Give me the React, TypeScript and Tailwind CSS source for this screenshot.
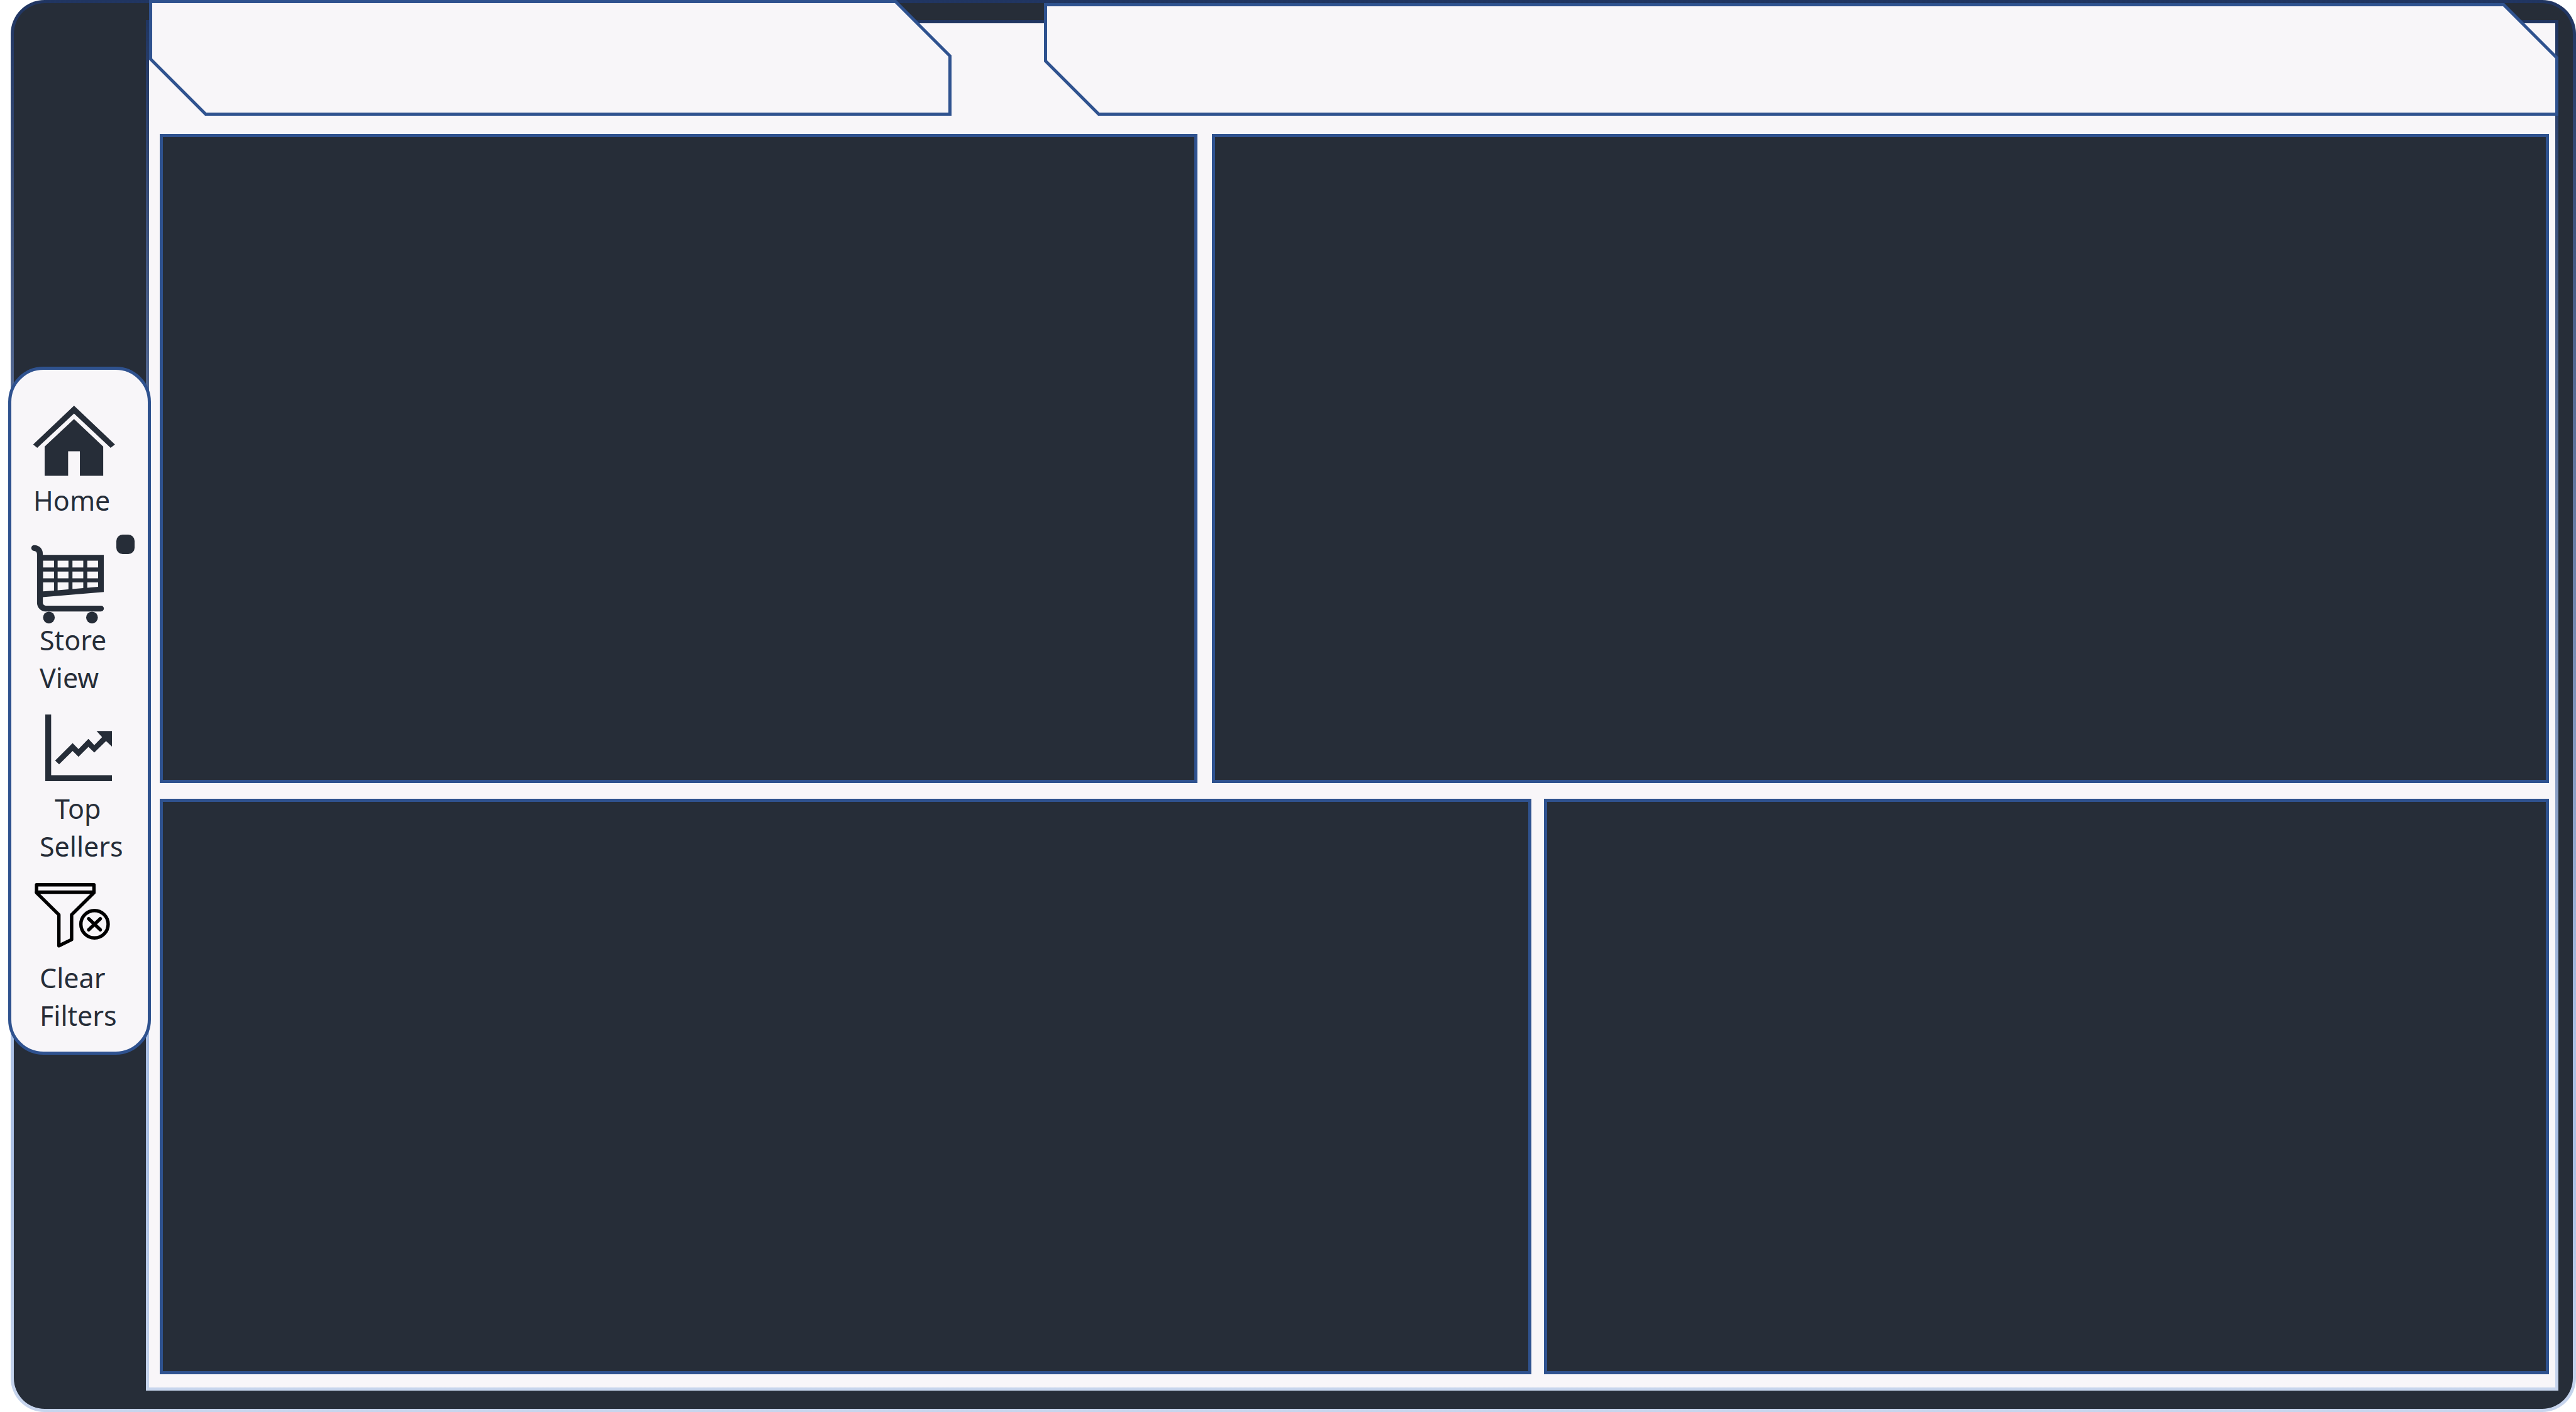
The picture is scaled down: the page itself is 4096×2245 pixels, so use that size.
import type { ReactNode } from "react";

function HomeIcon() {
  return (
    <svg aria-hidden="true" viewBox="0 0 146 126" className="ml-[3px] h-[114px] w-[132px]" fill="currentColor">
      <path d="M72.7 1 L144.7 69.3 L137 75.3 L72.7 14.8 L8 75.3 L.7 69.3Z" />
      <path d="M72.7 24.7 L124 72.9 V124.3 H83 V81.2 H62.3 V124.3 H21 V72.9Z" />
    </svg>
  );
}

function CartIcon() {
  return (
    <svg aria-hidden="true" viewBox="0 0 129 139" className="h-[126px] w-[117px]" fill="currentColor">
      <path
        d="M5.8 5.8 C12.5 6 16 10 16 17 V102 a10 10 0 0 0 10 10 H123"
        fill="none"
        stroke="currentColor"
        strokeWidth="10.2"
        strokeLinecap="round"
      />
      <path
        fillRule="evenodd"
        d="M20 17.9 H128 V83.1 L20 92.2Z
           M21.3 28.2 V40 H40.7 V28.2Z M47 28.2 V40 H66 V28.2Z M73 28.2 V40 H92 V28.2Z M99 28.2 V40 H118 V28.2Z
           M21.3 47.1 V59 H40.7 V47.1Z M47 47.1 V59 H66 V47.1Z M73 47.1 V59 H92 V47.1Z M99 47.1 V59 H118 V47.1Z
           M21.3 66.1 V82 L40.7 80.4 V66.1Z M47 66.1 V79.9 L66 78.3 V66.1Z M73 66.1 V77.7 L92 76.1 V66.1Z M99 66.1 V75.6 L118 74 V66.1Z"
      />
      <circle cx="31.7" cy="127.8" r="10.3" />
      <circle cx="107.3" cy="127.8" r="10.3" />
    </svg>
  );
}

function TrendIcon() {
  return (
    <svg aria-hidden="true" viewBox="0 0 117 117" className="ml-[23px] size-[106px]" fill="currentColor">
      <path d="M0 0 H10.3 V106.5 H117 V117 H0Z" />
      <path d="M17.3 80.8 L48 50.1 L58.3 60.6 L75.7 42.9 L86 53.9 L99.7 39.6 L90 29 H117 V56.4 L106.7 46.7 L86 66.9 L75.7 56.8 L58.3 74.1 L48 64 L24.3 87.5Z" />
    </svg>
  );
}

function ClearFilterIcon() {
  return (
    <svg
      aria-hidden="true"
      viewBox="0 0 133 114"
      className="ml-1.5 h-[103px] w-[121px] text-black"
      fill="none"
      stroke="currentColor"
      strokeWidth="6"
      strokeLinecap="round"
      strokeLinejoin="round"
    >
      <path d="M3 3.1 H104 V17 L64.7 55.7 V99.5 L42.3 110.4 V55.7 L3 17Z" />
      <path d="M3 16.1 H104" />
      <circle cx="105" cy="72.5" r="24" />
      <path d="M94.8 62.8 L115.2 82.2 M115.2 62.8 L94.8 82.2" />
    </svg>
  );
}

function Tab({ outer, inner }: { outer: string; inner: string }) {
  return (
    <div className={outer}>
      <div className={inner} />
    </div>
  );
}

function Panel({ className, label }: { className: string; label: string }) {
  return <section aria-label={label} className={`min-w-0 border-5 border-[#2f528f] bg-[#262d38] ${className}`} />;
}

function Label({ className, children }: { className: string; children: ReactNode }) {
  return <span className={`block text-[43px] leading-[60px] ${className}`}>{children}</span>;
}

export default function App() {
  return (
    <div className="flex min-h-screen bg-white pl-[17px] font-['Noto_Sans',sans-serif] text-[#262d38]">
      <div className="flex min-w-0 flex-1 rounded-[54px] border-5 border-transparent [background:linear-gradient(#262d38,#262d38)_padding-box,linear-gradient(#203561,#abc0e4_74%,#abc0e4_83%,#c7d5ed)_border-box]">
        <aside className="relative z-10 flex w-[210px] shrink-0 flex-col justify-center pt-[15px]">
          <nav className="-ml-[9px] flex w-[227px] flex-col gap-7 rounded-[56px] border-5 border-[#2f528f] bg-[#f8f6f9] pt-14 pb-[27px]">
            <a href="#home" className="mb-3 flex flex-col items-start gap-2 pl-[31px]">
              <HomeIcon />
              <Label className="ml-1">Home</Label>
            </a>
            <a href="#store" className="relative flex flex-col items-start pl-[31px]">
              <CartIcon />
              <Label className="-mt-1 ml-3.5">
                Store
                <br />
                View
              </Label>
              <span className="absolute -top-4 left-[167px] h-[31px] w-[29px] rounded-[10px] bg-[#262d38]" />
            </a>
            <a href="#sellers" className="flex flex-col items-start gap-3.5 pl-[31px]">
              <TrendIcon />
              <Label className="ml-3.5 indent-6">
                Top
                <br />
                Sellers
              </Label>
            </a>
            <button type="button" className="flex flex-col items-start gap-[18px] pl-[31px] text-left">
              <ClearFilterIcon />
              <Label className="ml-3.5">
                Clear
                <br />
                Filters
              </Label>
            </button>
          </nav>
        </aside>

        <main className="mt-[27px] mr-[23px] mb-[29px] flex min-w-0 flex-1 flex-col border-5 border-transparent [background:linear-gradient(#f8f6f9,#f8f6f9)_padding-box,linear-gradient(#203561,#abc0e4_74%,#abc0e4_83%,#c7d5ed)_border-box]">
          <header className="-mt-[37px] -mr-[5px] flex h-[184px] shrink-0">
            <Tab
              outer="flex flex-[1266] bg-[#2f528f] p-[5px] [clip-path:polygon(0_0,calc(100%-88px)_0,100%_88px,100%_100%,89px_100%,0_calc(100%-89px))]"
              inner="flex-1 bg-[#f8f6f9] [clip-path:polygon(0_0,calc(100%-85px)_0,100%_85px,100%_100%,86px_100%,0_calc(100%-86px))]"
            />
            <div className="flex-[147]" />
            <Tab
              outer="mt-[5px] flex flex-[2398] bg-[#2f528f] p-[5px] [clip-path:polygon(0_0,calc(100%-86px)_0,100%_86px,100%_100%,86px_100%,0_calc(100%-86px))]"
              inner="flex-1 bg-[#f8f6f9] [clip-path:polygon(0_0,calc(100%-83px)_0,100%_83px,100%_100%,83px_100%,0_calc(100%-83px))]"
            />
          </header>
          <div className="flex flex-1 flex-col gap-[25px] pt-[29px] pr-2.5 pb-[21px] pl-[17px]">
            <div className="flex flex-[1032] gap-[23px]">
              <Panel label="Top left panel" className="flex-[1640]" />
              <Panel label="Top right panel" className="flex-[2116]" />
            </div>
            <div className="flex flex-[915] gap-5">
              <Panel label="Bottom left panel" className="flex-[2171]" />
              <Panel label="Bottom right panel" className="flex-[1588]" />
            </div>
          </div>
        </main>
      </div>
    </div>
  );
}
